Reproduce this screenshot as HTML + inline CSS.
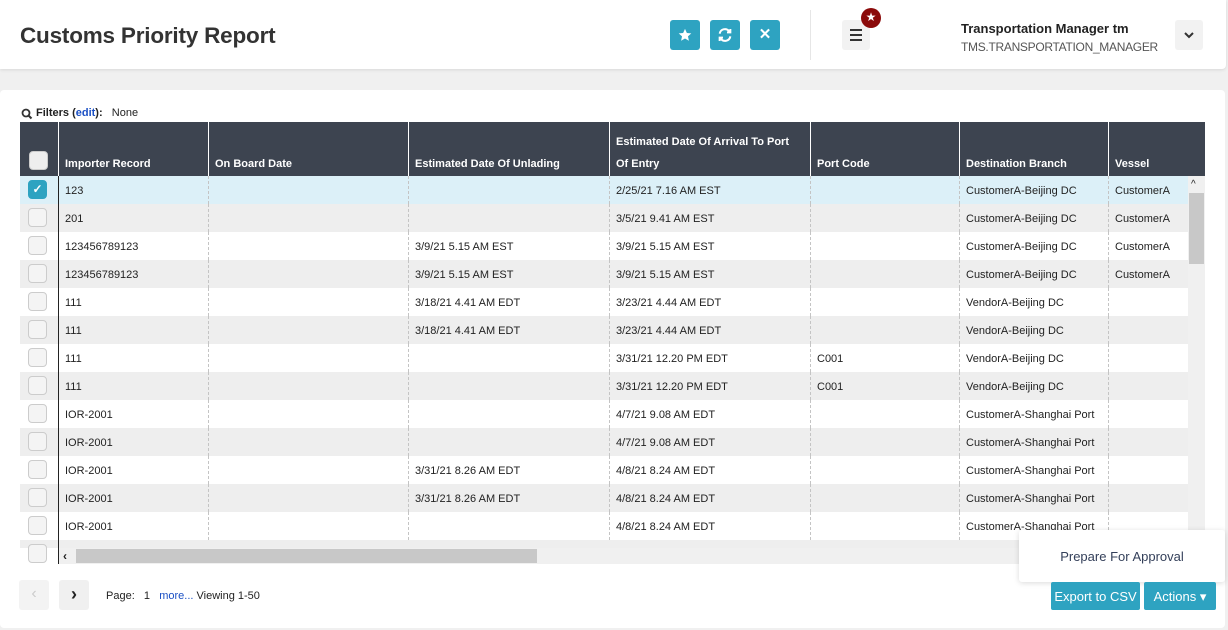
<!DOCTYPE html>
<html><head><meta charset="utf-8"><style>
*{box-sizing:border-box;margin:0;padding:0}
body{width:1228px;height:630px;background:#f0f0f0;font-family:"Liberation Sans",sans-serif;position:relative;overflow:hidden;color:#222}
.a{position:absolute}
.hdr{left:0;top:0;width:1226px;height:69px;background:#fff;border-radius:0 0 4px 0;box-shadow:0 1px 3px rgba(0,0,0,.1)}
.title{left:20px;top:23px;font-size:22.5px;font-weight:bold;color:#333;letter-spacing:-.2px}
.tb{width:30px;height:30px;top:20px;background:#2ea3c1;border-radius:3px;color:#fff;text-align:center;line-height:30px;font-size:15px;font-weight:bold}
.card{left:0;top:90px;width:1225px;height:538px;background:#fff;border-radius:4px}
.th{top:122px;height:54px;background:#3d4450}
.thc{position:absolute;top:122px;height:54px;color:#fff;font-size:11px;font-weight:bold;padding:0 6px;display:flex;align-items:flex-end;padding-bottom:1px;border-left:1px solid #fff;line-height:22px}
.row{position:absolute;left:20px;width:1168px;height:28px}
.c{position:absolute;top:0;height:28px;line-height:31px;font-size:11px;padding-left:6px;border-left:1px dashed #c4c4c4;white-space:nowrap;overflow:hidden}
.cb{position:absolute;left:8px;top:4px;width:19px;height:19px;border:1px solid #ccc;border-radius:4px;background:#f4f4f4}
.btn{height:28px;top:582px;background:#2ea3c1;color:#fff;font-size:13px;line-height:30px;text-align:center;border-radius:2px}
</style></head><body>
<div class="a hdr"></div>
<div class="a title">Customs Priority Report</div>
<div class="a tb" style="left:670px"><svg width="14" height="14" viewBox="0 0 24 24" style="margin-top:8px"><path fill="#fff" d="M12 1.5l3.2 7 7.6.8-5.7 5.1 1.6 7.5L12 18l-6.7 3.9 1.6-7.5L1.2 9.3l7.6-.8z"/></svg></div>
<div class="a tb" style="left:710px"><svg width="16" height="16" viewBox="0 0 24 24" style="margin-top:7px" fill="none" stroke="#fff" stroke-width="3"><path d="M4 10a8 8 0 0 1 14-4l2 2M20 14a8 8 0 0 1-14 4l-2-2"/><path d="M20 3v5h-5M4 21v-5h5" fill="none"/></svg></div>
<div class="a tb" style="left:750px">✕</div>
<div class="a" style="left:810px;top:10px;width:1px;height:50px;background:#e6e6e6"></div>
<div class="a" style="left:842px;top:20px;width:28px;height:30px;background:#f2f2f2;border-radius:3px"></div>
<div class="a" style="left:850px;top:29px;width:12px;height:2px;background:#333;box-shadow:0 5px 0 #333,0 10px 0 #333"></div>
<div class="a" style="left:861px;top:8px;width:20px;height:20px;border-radius:50%;background:#8b0a0a;color:#fff;text-align:center;line-height:19px;font-size:12px">★</div>
<div class="a" style="left:961px;top:21px;font-size:13px;font-weight:bold;color:#222">Transportation Manager tm</div>
<div class="a" style="left:961px;top:40px;font-size:12px;color:#555;letter-spacing:-.3px">TMS.TRANSPORTATION_MANAGER</div>
<div class="a" style="left:1175px;top:20px;width:28px;height:30px;background:#f2f2f2;border-radius:3px;text-align:center"><svg width="12" height="12" viewBox="0 0 12 12" style="margin-top:9px"><path d="M2 4l4 4 4-4" stroke="#333" stroke-width="2" fill="none"/></svg></div>
<div class="a card"></div>
<div class="a" style="left:21px;top:107px;width:14px;height:14px"><svg width="12" height="12" viewBox="0 0 12 12"><circle cx="5" cy="5" r="3.5" stroke="#333" stroke-width="1.8" fill="none"/><path d="M7.5 7.5l3 3" stroke="#333" stroke-width="2"/></svg></div>
<div class="a" style="left:36px;top:107px;font-size:11px"><b>Filters (<span style="color:#1a4fc4">edit</span>):</b>&nbsp;&nbsp; None</div>
<div class="a th" style="left:20px;width:1185px"></div>
<div class="a" style="left:29px;top:151px;width:19px;height:19px;border:1px solid #ccc;border-radius:4px;background:#eee"></div>
<div class="thc" style="left:58px;width:150px">Importer Record</div>
<div class="thc" style="left:208px;width:200px">On Board Date</div>
<div class="thc" style="left:408px;width:201px">Estimated Date Of Unlading</div>
<div class="thc" style="left:609px;width:201px">Estimated Date Of Arrival To Port Of Entry</div>
<div class="thc" style="left:810px;width:149px">Port Code</div>
<div class="thc" style="left:959px;width:149px">Destination Branch</div>
<div class="thc" style="left:1108px;width:97px">Vessel</div>
<div id="rows"></div>
<div class="a" style="left:20px;top:540px;width:1168px;height:8px;background:#eee"></div>
<div class="a" style="left:28px;top:544px;width:19px;height:19px;border:1px solid #ccc;border-radius:4px;background:#f4f4f4"></div>
<div class="a" style="left:58px;top:176px;width:1px;height:388px;background:#222"></div>
<div class="a" style="left:59px;top:548px;width:1129px;height:16px;background:#f0f0f0"></div>
<div class="a" style="left:76px;top:549px;width:461px;height:14px;background:#c8c8c8"></div>
<div class="a" style="left:63px;top:549px;font-size:12px;font-weight:bold">‹</div>
<div class="a" style="left:1188px;top:176px;width:17px;height:388px;background:#f0f0f0"></div>
<div class="a" style="left:1189px;top:193px;width:15px;height:71px;background:#c8c8c8"></div>
<div class="a" style="left:1191px;top:179px;font-size:10px">^</div>
<div class="a" style="left:19px;top:580px;width:30px;height:30px;background:#f3f3f3;border-radius:3px;color:#ccc;text-align:center;line-height:28px;font-size:16px">‹</div>
<div class="a" style="left:59px;top:580px;width:30px;height:30px;background:#f0f0f0;border-radius:3px;color:#222;text-align:center;line-height:28px;font-size:18px;font-weight:bold">›</div>
<div class="a" style="left:106px;top:590px;font-size:11px">Page:&nbsp;&nbsp; 1 &nbsp;&nbsp;<span style="color:#1a4fc4">more...</span> Viewing 1-50</div>
<div class="a" style="left:1019px;top:530px;width:206px;height:52px;background:#fff;border-radius:3px;box-shadow:0 1px 6px rgba(0,0,0,.15);text-align:center;line-height:54px;font-size:13px;color:#34405a">Prepare For Approval</div>
<div class="a btn" style="left:1051px;width:89px">Export to CSV</div>
<div class="a btn" style="left:1144px;width:72px">Actions ▾</div>
<script>
var d=[["123","","","2/25/21 7.16 AM EST","","CustomerA-Beijing DC","CustomerA"],["201","","","3/5/21 9.41 AM EST","","CustomerA-Beijing DC","CustomerA"],["123456789123","","3/9/21 5.15 AM EST","3/9/21 5.15 AM EST","","CustomerA-Beijing DC","CustomerA"],["123456789123","","3/9/21 5.15 AM EST","3/9/21 5.15 AM EST","","CustomerA-Beijing DC","CustomerA"],["111","","3/18/21 4.41 AM EDT","3/23/21 4.44 AM EDT","","VendorA-Beijing DC",""],["111","","3/18/21 4.41 AM EDT","3/23/21 4.44 AM EDT","","VendorA-Beijing DC",""],["111","","","3/31/21 12.20 PM EDT","C001","VendorA-Beijing DC",""],["111","","","3/31/21 12.20 PM EDT","C001","VendorA-Beijing DC",""],["IOR-2001","","","4/7/21 9.08 AM EDT","","CustomerA-Shanghai Port",""],["IOR-2001","","","4/7/21 9.08 AM EDT","","CustomerA-Shanghai Port",""],["IOR-2001","","3/31/21 8.26 AM EDT","4/8/21 8.24 AM EDT","","CustomerA-Shanghai Port",""],["IOR-2001","","3/31/21 8.26 AM EDT","4/8/21 8.24 AM EDT","","CustomerA-Shanghai Port",""],["IOR-2001","","","4/8/21 8.24 AM EDT","","CustomerA-Shanghai Port",""]];
var x=[58,208,408,609,810,959,1108,1188],h="";
d.forEach(function(r,i){var bg=i==0?"#dcf0f8":(i%2?"#eeeeee":"#fff");h+='<div class="row" style="top:'+(176+i*28)+'px;background:'+bg+'">';
h+=i==0?'<div class="cb" style="background:#2ea3c1;border-color:#2ea3c1;color:#fff;text-align:center;line-height:17px;font-size:12px;font-weight:bold">✓</div>':'<div class="cb"></div>';
for(var j=0;j<7;j++)h+='<div class="c" style="left:'+(x[j]-20)+'px;width:'+(x[j+1]-x[j])+'px">'+r[j]+'</div>';h+='</div>';});
document.getElementById("rows").innerHTML=h;
</script>
</body></html>
